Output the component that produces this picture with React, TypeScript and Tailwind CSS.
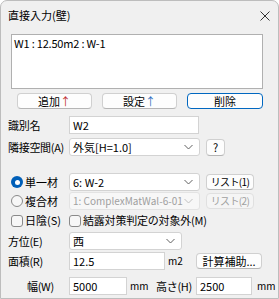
import React from 'react';

const FONT = '"Noto Sans CJK JP", "Noto Sans", sans-serif';

// Windows-style push button
const Btn: React.FC<{ w: string; label: React.ReactNode; primary?: boolean; disabled?: boolean; h?: string; size?: string }> = ({
  w,
  label,
  primary,
  disabled,
  h = 'h-[16px]',
  size = 'text-[11px]',
}) => (
  <div
    className={`${w} ${h} ${size} flex items-center justify-center rounded-[4px] border leading-none whitespace-nowrap ${
      primary
        ? 'border-[#0067c0] bg-[#fdfdfd] text-black'
        : disabled
        ? 'border-[#e0e0e0] bg-[#f5f5f5] text-[#a0a0a0]'
        : 'border-[#d0d0d0] border-b-[#b5b5b5] bg-[#fdfdfd] text-black'
    }`}
  >
    {label}
  </div>
);

const Chevron: React.FC<{ muted?: boolean }> = ({ muted }) => (
  <svg width="9" height="6" viewBox="0 0 9 6" className="mr-[6px] shrink-0">
    <path d="M0.5 1 L4.5 5 L8.5 1" fill="none" stroke={muted ? '#c0c0c0' : '#606060'} strokeWidth="1" />
  </svg>
);

const Select: React.FC<{ w: string; value: string; disabled?: boolean; size?: string }> = ({
  w,
  value,
  disabled,
  size = 'text-[11px]',
}) => (
  <div
    className={`${w} ${size} h-[18px] flex items-center justify-between rounded-[3px] border leading-none ${
      disabled ? 'border-[#e3e3e3] bg-[#f7f7f7] text-[#a0a0a0]' : 'border-[#d3d3d3] bg-white text-black'
    }`}
  >
    <span className="pl-[3px] whitespace-nowrap">{value}</span>
    <Chevron muted={disabled} />
  </div>
);

const TextBox: React.FC<{ w: string; value: string }> = ({ w, value }) => (
  <div className={`${w} h-[18px] flex items-center border border-[#d3d3d3] bg-white text-[11px] leading-none shrink-0`}>
    <span className="pl-[3px]">{value}</span>
  </div>
);

const Label: React.FC<{ children: React.ReactNode; indent?: string }> = ({ children, indent = '' }) => (
  <div className={`w-[61px] shrink-0 text-[11px] tracking-[-0.3px] leading-none whitespace-nowrap ${indent}`}>
    {children}
  </div>
);

const Radio: React.FC<{ checked?: boolean }> = ({ checked }) =>
  checked ? (
    <div className="w-[12px] h-[12px] rounded-full bg-[#005fb8] flex items-center justify-center shrink-0">
      <div className="w-[5px] h-[5px] rounded-full bg-white" />
    </div>
  ) : (
    <div className="w-[12px] h-[12px] rounded-full border border-[#8a8a8a] bg-[#f7f7f7] shrink-0" />
  );

const Check: React.FC = () => (
  <div className="w-[12px] h-[12px] rounded-[3px] border border-[#8a8a8a] bg-[#f7f7f7] shrink-0" />
);

export default function App() {
  return (
    <div
      className="w-[279px] h-[299px] bg-[#f0f0f0] border border-[#bdbdbd] rounded-t-[7px] text-black overflow-hidden"
      style={{ fontFamily: FONT }}
    >
      {/* title bar */}
      <div className="h-[29px] flex items-center justify-between pl-[7px] pr-[8px]">
        <span className="text-[11px] leading-none">直接入力(壁)</span>
        <svg width="10" height="10" viewBox="0 0 10 10">
          <path d="M0.5 0.5 L9.5 9.5 M9.5 0.5 L0.5 9.5" stroke="#333" strokeWidth="1" />
        </svg>
      </div>

      {/* list */}
      <div className="ml-[10px] mt-[4px] w-[252px] h-[55px] border border-[#b0b0b0] bg-white">
        <div className="pl-[2px] pt-[3px] text-[11px] tracking-[-0.2px] leading-none">W1 : 12.50m2 : W-1</div>
      </div>

      {/* buttons */}
      <div className="mt-[4px] ml-[16px] flex gap-[10px]">
        <Btn w="w-[75px]" label={<span>追加<span className="text-[#c03030]">↑</span></span>} />
        <Btn w="w-[75px]" label={<span>設定<span className="text-[#3070c0]">↑</span></span>} />
        <Btn w="w-[76px]" label="削除" primary />
      </div>

      <div className="pl-[7px]">
        <div className="mt-[7px] flex items-center">
          <Label>識別名</Label>
          <TextBox w="w-[130px]" value="W2" />
        </div>

        <div className="mt-[4px] flex items-center">
          <Label>隣接空間(A)</Label>
          <Select w="w-[131px]" value="外気[H=1.0]" />
          <div className="ml-[6px]">
            <Btn w="w-[19px]" h="h-[17px]" label="?" />
          </div>
        </div>

        <div className="mt-[17px] flex items-center">
          <div className="w-[61px] shrink-0 flex items-center gap-[2px] pl-[3px]">
            <Radio checked />
            <span className="text-[11px] leading-none">単一材</span>
          </div>
          <Select w="w-[131px]" value="6: W-2" />
          <div className="ml-[6px]">
            <Btn w="w-[48px]" size="text-[10px] tracking-[-0.6px]" label="リスト(1)" />
          </div>
        </div>

        <div className="mt-[1px] flex items-center">
          <div className="w-[61px] shrink-0 flex items-center gap-[2px] pl-[3px]">
            <Radio />
            <span className="text-[11px] leading-none">複合材</span>
          </div>
          <Select w="w-[131px]" size="text-[10px]" value="1: ComplexMatWal-6-01" disabled />
          <div className="ml-[6px]">
            <Btn w="w-[48px]" size="text-[10px] tracking-[-0.6px]" label="リスト(2)" disabled />
          </div>
        </div>

        <div className="mt-[4px] h-[13px] flex items-center">
          <div className="w-[61px] shrink-0 flex items-center gap-[2px] pl-[3px]">
            <Check />
            <span className="text-[11px] leading-none whitespace-nowrap">日陰(S)</span>
          </div>
          <div className="flex items-center gap-[2px]">
            <Check />
            <span className="text-[11px] tracking-[-0.2px] leading-none whitespace-nowrap">結露対策判定の対象外(M)</span>
          </div>
        </div>

        <div className="mt-[5px] flex items-center">
          <Label>方位(E)</Label>
          <Select w="w-[113px]" value="西" />
        </div>

        <div className="mt-[2px] flex items-center">
          <Label>面積(R)</Label>
          <TextBox w="w-[96px]" value="12.5" />
          <span className="ml-[3px] w-[28px] text-[10px] leading-none">m2</span>
          <Btn w="w-[66px]" label="計算補助..." />
        </div>

        <div className="mt-[7px] flex items-center">
          <Label indent="pl-[19px]">幅(W)</Label>
          <TextBox w="w-[58px]" value="5000" />
          <span className="ml-[3px] w-[26px] text-[10px] leading-none">mm</span>
          <span className="w-[40px] text-[11px] tracking-[-0.3px] leading-none whitespace-nowrap">高さ(H)</span>
          <TextBox w="w-[56px]" value="2500" />
          <span className="ml-[5px] text-[10px] leading-none">mm</span>
        </div>
      </div>
    </div>
  );
}
